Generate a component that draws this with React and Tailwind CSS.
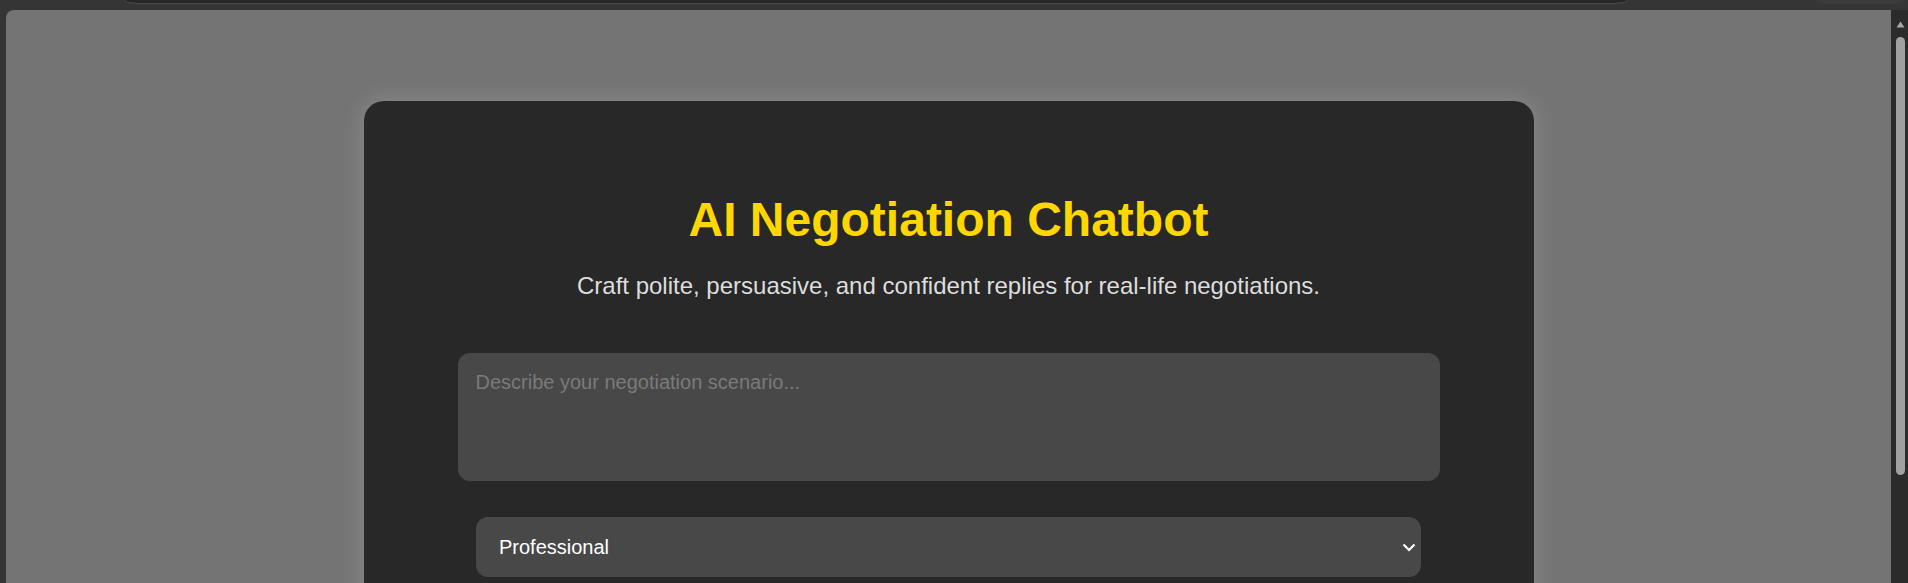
import React from "react";

function BrowserChrome() {
  return (
    <div className="h-[10px] flex items-start">
      <div className="ml-[124px] w-[1504px] h-[4px] bg-[#262626] border-b border-l border-r border-[#4a4a4a] rounded-bl-[16px_4px] rounded-br-[16px_4px]" />
      <div className="ml-[189px] w-[86px] h-[4px] bg-[#3b3b3b] rounded-bl-[10px_4px] rounded-br-[10px_4px]" />
    </div>
  );
}

function Scrollbar() {
  return (
    <div className="w-[17px] bg-[#2b2b2b] flex flex-col items-center pl-[2px]">
      <svg width="9" height="7" viewBox="0 0 9 7" className="mt-[11px]">
        <path d="M4.5 0.5 L8.5 6.5 L0.5 6.5 Z" fill="#a8a8a8" />
      </svg>
      <div className="mt-[9px] w-[9px] h-[438px] rounded-full bg-[#a0a0a0]" />
    </div>
  );
}

function NegotiationCard() {
  return (
    <div className="mx-auto mt-[91px] w-[1170px] h-[600px] bg-[#282828] rounded-[20px] shadow-[0_0_24px_rgba(255,255,255,0.18)] pt-[91px] text-center">
      <h1 className="text-[48px] leading-[56px] font-bold text-[#ffd700]">AI Negotiation Chatbot</h1>
      <p className="mt-[24px] text-[24px] leading-[28px] text-[#dddddd]">
        Craft polite, persuasive, and confident replies for real-life negotiations.
      </p>
      <textarea
        placeholder="Describe your negotiation scenario..."
        className="block mx-auto mt-[53px] w-[982px] h-[128px] p-[18px] text-[20px] leading-[23px] text-white bg-[#484848] rounded-[12px] resize-none outline-none placeholder:text-[#7a7a7a]"
      />
      <div className="relative mx-auto mt-[36px] w-[945px]">
        <select className="block w-full h-[60px] pl-[23px] pr-[30px] text-[20px] text-white bg-[#484848] rounded-[12px] appearance-none outline-none">
          <option>Professional</option>
          <option>Friendly</option>
          <option>Assertive</option>
        </select>
        <svg width="14" height="9" viewBox="0 0 14 9" className="absolute right-[5px] top-[26px] pointer-events-none">
          <path d="M1.5 1.5 L7 7 L12.5 1.5" fill="none" stroke="#ffffff" strokeWidth="2.2" />
        </svg>
      </div>
    </div>
  );
}

export default function App() {
  return (
    <div className="h-screen overflow-hidden bg-[#353535] flex flex-col font-['Liberation_Sans',Arial,sans-serif]">
      <BrowserChrome />
      <div className="flex-1 flex min-h-0">
        <div className="w-[6px]" />
        <main className="flex-1 bg-[#747474] rounded-tl-[8px] overflow-hidden">
          <NegotiationCard />
        </main>
        <Scrollbar />
      </div>
    </div>
  );
}
